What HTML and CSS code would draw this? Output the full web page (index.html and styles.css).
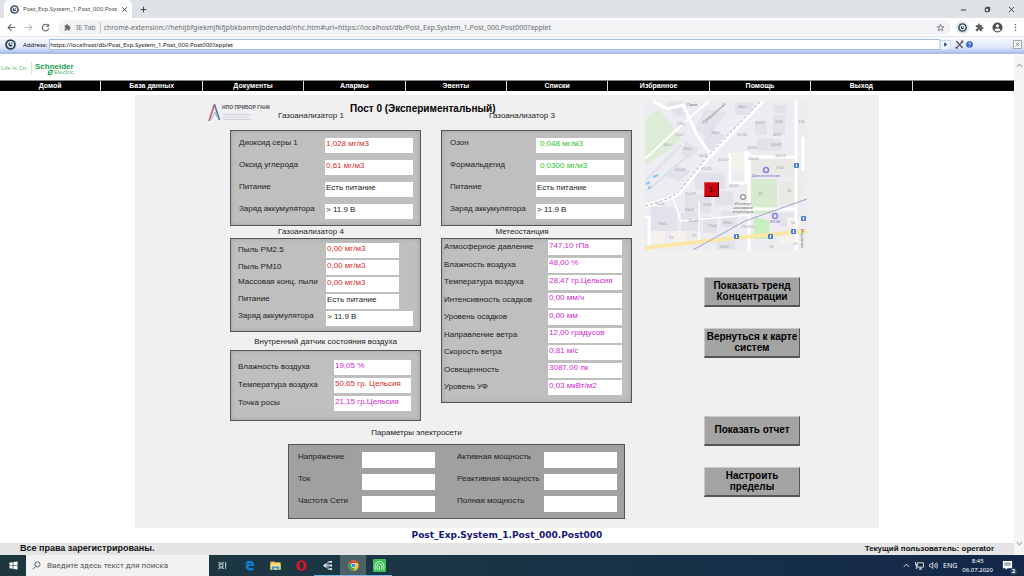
FILE: index.html
```html
<!DOCTYPE html>
<html lang="ru">
<head>
<meta charset="utf-8">
<title>Post_Exp.System_1.Post_000.Post000</title>
<link rel="stylesheet" href="styles.css">
</head>
<body>
<svg class="defs" width="0" height="0" aria-hidden="true">
  <symbol id="ietab" viewBox="0 0 10 10"><circle cx="5" cy="5" r="4.8" fill="#2c4258"/><circle cx="5" cy="5" r="2.6" fill="none" stroke="#e8f1f6" stroke-width="1.3"/><path d="M5 4.8h2.8M5 2.6v2.4" stroke="#e8f1f6"/></symbol>
  <symbol id="puzzle" viewBox="0 0 24 24"><path fill="#5f6368" d="M20.5 11H19V7a2 2 0 0 0-2-2h-4V3.500a2.500 2.500 0 0 0-5 0V5H4a2 2 0 0 0-2 2v3.800h1.500a2.700 2.700 0 0 1 0 5.400H2V20a2 2 0 0 0 2 2h3.800v-1.500a2.700 2.700 0 0 1 5.400 0V22H17a2 2 0 0 0 2-2v-4h1.500a2.500 2.500 0 0 0 0-5z"/></symbol>
</svg>

<header class="tabstrip">
  <div class="tab">
    <svg class="ico9"><use href="#ietab"/></svg>
    <span class="tab-title">Post_Exp.System_1.Post_000.Post</span>
    <button class="plain" aria-label="Закрыть вкладку"><svg class="ico7" viewBox="0 0 8 8"><path d="M1.500 1.500l5 5M6.500 1.500l-5 5" stroke="#3c4043" stroke-width="1.100"/></svg></button>
  </div>
  <button class="plain new-tab" aria-label="Новая вкладка"><svg class="ico7" viewBox="0 0 8 8"><path d="M4 .8v6.400M.8 4h6.400" stroke="#3c4043" stroke-width="1.100"/></svg></button>
  <div class="window-buttons">
    <button class="plain" aria-label="Свернуть"><svg class="ico7" viewBox="0 0 8 8"><path d="M1 4.500h6" stroke="#222"/></svg></button>
    <button class="plain" aria-label="Восстановить"><svg class="ico7" viewBox="0 0 8 8"><path d="M1.500 2.500h4v4h-4zM2.500 2.500v-1h4v4h-1" fill="none" stroke="#222"/></svg></button>
    <button class="plain" aria-label="Закрыть"><svg class="ico7" viewBox="0 0 8 8"><path d="M1 1l6 6M7 1L1 7" stroke="#222" stroke-width=".9"/></svg></button>
  </div>
</header>

<div class="toolbar">
  <button class="plain" aria-label="Назад"><svg class="ico9" viewBox="0 0 10 10"><path d="M9.200 5H1.400M4.800 1.400L1.200 5l3.600 3.600" fill="none" stroke="#5f6368" stroke-width="1.200"/></svg></button>
  <button class="plain" aria-label="Вперёд"><svg class="ico9" viewBox="0 0 10 10"><path d="M.8 5h7.800M5.200 1.400L8.800 5 5.200 8.600" fill="none" stroke="#bdc1c6" stroke-width="1.200"/></svg></button>
  <button class="plain" aria-label="Обновить"><svg class="ico9" viewBox="0 0 10 10"><path d="M8.200 3A3.700 3.700 0 1 0 8.700 6" fill="none" stroke="#5f6368" stroke-width="1.200"/><path d="M9 .8v3.500H5.500z" fill="#5f6368"/></svg></button>
  <div class="omnibox">
    <svg class="ico7"><use href="#puzzle"/></svg>
    <span class="scheme">IE Tab</span>
    <input class="omni-input" aria-label="Адрес страницы" value="chrome-extension://hehijbfgiekmjfkfjpbkbammjbdenadd/nhc.htm#url=https://localhost/db/Post_Exp.System_1.Post_000.Post000?applet">
    <button class="plain" aria-label="В закладки"><svg class="ico9" viewBox="0 0 24 24"><path d="M12 3.500l2.500 6 6.500.5-5 4.200 1.600 6.300-5.600-3.500-5.600 3.500L8 14.200 3 10l6.500-.5z" fill="none" stroke="#5f6368" stroke-width="2"/></svg></button>
  </div>
  <button class="plain ext-active" aria-label="IE Tab"><svg class="ico9"><use href="#ietab"/></svg></button>
  <button class="plain" aria-label="Расширения"><svg class="ico9"><use href="#puzzle"/></svg></button>
  <button class="plain" aria-label="Профиль"><svg class="ico11" viewBox="0 0 12 12"><circle cx="6" cy="6" r="5.500" fill="#4d5156"/><circle cx="6" cy="4.200" r="1.700" fill="#fff"/><path d="M2.700 8.600c1-1.900 5.600-1.900 6.600 0-1.600 2-5 2-6.600 0z" fill="#fff"/></svg></button>
  <button class="plain" aria-label="Меню"><svg class="ico9" viewBox="0 0 10 10"><path d="M5 1v1.400M5 4.300v1.400M5 7.600V9" stroke="#5f6368" stroke-width="1.400"/></svg></button>
</div>

<div class="iebar">
  <svg class="ico11"><use href="#ietab"/></svg>
  <label for="ie-url">Address:</label>
  <input id="ie-url" value="https://localhost/db/Post_Exp.System_1.Post_000.Post000?applet">
  <button class="plain go" aria-label="Перейти"><svg class="ico7" viewBox="0 0 8 8"><path d="M2.500 1.500L6 4 2.500 6.500z" fill="#1e4796"/></svg></button>
  <button class="plain tools" aria-label="Настройки"><svg class="ico9" viewBox="0 0 10 10"><path d="M1.500 1l7 8M8.500 1.500L1.500 9" stroke="#4a4f55" stroke-width="1.500"/><path d="M6.500 1.500l2-.7.6 2M1 7.500l.3 1.700 2-.2" fill="none" stroke="#4a4f55"/></svg></button>
  <button class="plain" aria-label="Справка"><svg class="ico7" viewBox="0 0 8 8"><circle cx="4" cy="4" r="3.800" fill="#3465cf"/><path d="M2.800 3.200c0-1.600 2.600-1.500 2.400 0C5.100 4 4 4 4 5M4 5.600v1" fill="none" stroke="#fff" stroke-width=".9"/></svg></button>
  <button class="plain ie-close" aria-label="Закрыть панель"><svg class="ico9" viewBox="0 0 10 10"><path d="M.5.500h9v9h-9z" fill="#fff" stroke="#9a9a9a"/><path d="M2.800 2.800l4.400 4.400M7.200 2.800L2.800 7.200" stroke="#777"/></svg></button>
</div>

<div class="viewport">
  <main class="page">
    <div class="brand">
      <span class="life">Life Is On</span>
      <span class="schneider"><b>Schneider</b><span class="electric"><svg class="mark" viewBox="0 0 6 5"><path d="M1 4.500L2 .5h3.500l-1 4zM2 3.500L4.500 1.500" fill="none" stroke="#27a350"/></svg>Electric</span></span>
    </div>
    <nav class="menu">
      <a href="#home">Домой</a><a href="#db">База данных</a><a href="#docs">Документы</a><a href="#alarms">Алармы</a><a href="#events">Эвенты</a><a href="#lists">Списки</a><a href="#fav">Избранное</a><a href="#help">Помощь</a><a href="#exit">Выход</a><span></span>
    </nav>

    <div class="applet">
      <div class="data">
        <div class="post-head">
          <svg class="npo" viewBox="0 0 45 20" aria-hidden="true"><path d="M1 18L6.500 1.500" stroke="#c8566a" stroke-width="1.600"/><path d="M6.500 1.500L11.500 17" stroke="#5870a8" stroke-width="1.600"/><path d="M3.500 16.500L7 9l2 5" fill="none" stroke="#a9b2cc"/><path d="M15 11.500h28M15 14h26M15 16.500h28" stroke="#c9ccde" stroke-width=".9"/></svg>
          <span class="npo-name">НПО ПРИБОР ГАНК</span>
          <h1>Пост 0 (Экспериментальный)</h1>
        </div>
        <div class="columns">
          <div class="column">
            <h2 class="shifted first">Газоанализатор 1</h2>
            <section class="panel gas">
              <div class="row"><label for="so2">Диоксид серы 1</label><input readonly id="so2" class="red" value="1,028 мг/м3"></div>
              <div class="row"><label for="co">Оксид углерода</label><input readonly id="co" class="red" value="0,61 мг/м3"></div>
              <div class="row"><label for="p1">Питание</label><input readonly id="p1" value="Есть питание"></div>
              <div class="row"><label for="b1">Заряд аккумулятора</label><input readonly id="b1" value="&gt; 11.9 В"></div>
            </section>
            <h2 class="shifted">Газоанализатор 4</h2>
            <section class="panel dust">
              <div class="row low"><label for="pm25">Пыль PM2.5</label><input readonly id="pm25" class="red" value="0,00 мг/м3"></div>
              <div class="row low"><label for="pm10">Пыль PM10</label><input readonly id="pm10" class="red" value="0,00 мг/м3"></div>
              <div class="row"><label for="mass">Массовая конц. пыли</label><input readonly id="mass" class="red" value="0,00 мг/м3"></div>
              <div class="row"><label for="p4">Питание</label><input readonly id="p4" value="Есть питание"></div>
              <div class="row wide"><label for="b4">Заряд аккумулятора</label><input readonly id="b4" value="&gt; 11.9 В"></div>
            </section>
            <h2 class="indoor-title">Внутренний датчик состояния воздуха</h2>
            <section class="panel indoor">
              <div class="row low"><label for="ih">Влажность воздуха</label><input readonly id="ih" class="pink" value="19,05 %"></div>
              <div class="row low"><label for="it">Температура воздуха</label><input readonly id="it" class="red" value="50,65 гр. Цельсия"></div>
              <div class="row low"><label for="idp">Точка росы</label><input readonly id="idp" class="pink" value="21,15 гр.Цельсия"></div>
            </section>
          </div>
          <div class="column">
            <h2 class="shifted first">Газоанализатор 3</h2>
            <section class="panel gas">
              <div class="row"><label for="o3">Озон</label><input readonly id="o3" class="green" value="0,048 мг/м3"></div>
              <div class="row"><label for="ch2o">Формальдегид</label><input readonly id="ch2o" class="green" value="0,0300 мг/м3"></div>
              <div class="row"><label for="p3">Питание</label><input readonly id="p3" value="Есть питание"></div>
              <div class="row"><label for="b3">Заряд аккумулятора</label><input readonly id="b3" value="&gt; 11.9 В"></div>
            </section>
            <h2 class="shifted">Метеостанция</h2>
            <section class="panel meteo">
              <div class="row low"><label for="m1">Атмосферное давление</label><input readonly id="m1" class="pink" value="747,10 гПа"></div>
              <div class="row low"><label for="m2">Влажность воздуха</label><input readonly id="m2" class="pink" value="48,00 %"></div>
              <div class="row low"><label for="m3">Температура воздуха</label><input readonly id="m3" class="pink" value="28,47 гр.Цельсия"></div>
              <div class="row low"><label for="m4">Интенсивность осадков</label><input readonly id="m4" class="pink" value="0,00 мм/ч"></div>
              <div class="row low"><label for="m5">Уровень осадков</label><input readonly id="m5" class="pink" value="0,00 мм"></div>
              <div class="row low"><label for="m6">Направление ветра</label><input readonly id="m6" class="pink" value="12,00 градусов"></div>
              <div class="row low"><label for="m7">Скорость ветра</label><input readonly id="m7" class="pink" value="0,81 м/с"></div>
              <div class="row low"><label for="m8">Освещенность</label><input readonly id="m8" class="pink" value="3087,00 лк"></div>
              <div class="row low"><label for="m9">Уровень УФ</label><input readonly id="m9" class="pink" value="0,03 мкВт/м2"></div>
            </section>
          </div>
        </div>
        <div class="power-block">
          <h2 class="power-title">Параметры электросети</h2>
          <section class="panel power">
            <label for="e1">Напряжение</label><input readonly id="e1"><label for="e4">Активная мощность</label><input readonly id="e4">
            <label for="e2">Ток</label><input readonly id="e2"><label for="e5">Реактивная мощность</label><input readonly id="e5">
            <label for="e3">Частота Сети</label><input readonly id="e3"><label for="e6">Полная мощность</label><input readonly id="e6">
          </section>
        </div>
      </div>

      <aside class="side">
        <svg class="map" viewBox="0 0 162 149">
          <rect width="162" height="149" fill="#ededf1"/>
          <path d="M0 20L14 8 36 38 22 50 0 64z" fill="#dcecd6"/>
          <path d="M106 78h26v35h-26z" fill="#d8ebd0"/><path d="M109 116l16 4-1 18h-15z" fill="#c9efbd"/>
          <path d="M107 58h44v18h-44zM134 80h22v24h-22z" fill="#ebe9e6"/>
          <g fill="#e1e2ea"><path d="M60 8l22 4-20 24-12-8zM22 2l14-2 8 14-12 2zM66 28l14 6-14 16-10-6zM110 20h12v14h-12zM128 14h12v20h-12zM112 38h24v12h-24zM128 4h14v8h-14zM40 40l14 8-10 10-8-6zM30 64l16 6-12 10-12-4zM50 72h30v16H50zM40 94h26v18H40zM70 90h18v14H70zM6 106h26v24H6zM36 112h20v18H36zM58 116h14v16H58zM76 110h16v16H76zM134 112h20v14h-20zM72 140h18v9H72zM90 2h18v12H90z"/></g>
          <g fill="#f5f2ee"><path d="M6 130h14v13H6zM26 130h14v10H26zM134 132h20v12h-20zM88 52h12v18H88zM142 116h14v10h-14z"/></g>
          <g fill="none" stroke="#fff">
            <path d="M0 105Q28 98 36 90L62 58 118 0" stroke-width="4"/>
            <path d="M8 0l14 8 16-4 14 30 14 20" stroke-width="3"/><path d="M0 58l28-26 38-34" stroke-width="2"/>
            <path d="M85 52v30h16V50M104 52v97M151 0v149M0 116h4v33M104 56h48M104 108h48M158 36v34" stroke-width="3"/>
            <path d="M28 98l8 22 68-6M54 100v40" stroke-width="1.500"/>
          </g>
          <path d="M0 80L36 44M2 90L46 52" stroke="#dde0ea" stroke-width="2"/>
          <path d="M0 105Q28 98 36 88L62 56 116 0" fill="none" stroke="#a6a6a6" stroke-dasharray="3 2"/>
          <path d="M0 147L60 140 110 135 162 130" fill="none" stroke="#fbe7a9" stroke-width="4"/>
          <path d="M48 149L100 120 162 98" fill="none" stroke="#9da2cc"/>
          <path d="M1 83l4-2M8 76l5-2M3 87l3-1" stroke="#83cbee" stroke-width="2"/>
          <g class="house">
            <text x="32" y="24">23к2</text><text x="30" y="35">24к2</text><text x="18" y="45">30к1</text><text x="38" y="49">28к1</text><text x="66" y="33">33к3</text><text x="92" y="35">32/34</text><text x="102" y="48">32/34</text><text x="54" y="56">30/3</text><text x="30" y="70">31к45</text><text x="56" y="69">31к30</text><text x="73" y="60">31к19</text><text x="40" y="94">31к28</text><text x="58" y="105">31к3</text><text x="11" y="104">31к4</text><text x="40" y="110">31к4</text><text x="43" y="121">31к46</text><text x="13" y="124">18к3</text><text x="78" y="123">19к2</text><text x="63" y="126">19к4</text><text x="96" y="127">29к310</text><text x="24" y="138">19</text><text x="47" y="136">15</text><text x="75" y="147">35к3</text><text x="110" y="23">30/37</text><text x="130" y="22">33/4</text><text x="128" y="35">30/2</text><text x="126" y="45">30к33</text><text x="130" y="56">30к13</text><text x="131" y="68">37к2</text><text x="103" y="59">34к56</text><text x="84" y="86">30/29</text><text x="93" y="7">30к1</text><text x="153" y="22">136</text><text x="113" y="94">43</text><text x="142" y="91">45</text><text x="146" y="123">50</text><text x="148" y="144">26</text><text x="124" y="147">76</text>
            <text transform="translate(59 23) rotate(-42)" class="street">Промышленная</text><text x="42" y="5" class="street">Пром.</text>
            <text transform="translate(156 128) rotate(90)" class="street">Миронова</text>
          </g>
          <g fill="#4581d6"><rect x="149" y="62" width="5" height="5" rx="1"/><rect x="156" y="115" width="5" height="5" rx="1"/><rect x="146" y="128" width="5" height="5" rx="1"/><rect x="123" y="133" width="5" height="5" rx="1"/><rect x="89" y="133" width="5" height="5" rx="1"/></g>
          <g fill="#fff"><path d="M151 63h1v3h-1zM158 116h1v3h-1zM148 129h1v3h-1zM125 134h1v3h-1zM91 134h1v3h-1z"/></g>
          <g fill="none" stroke="#8a77e4"><circle cx="121" cy="69" r="2.500" stroke-width="1.500"/><circle cx="130" cy="115" r="2.500" stroke-width="1.500"/></g>
          <circle cx="98" cy="96" r="2.400" fill="#fff" stroke="#8f8f94" stroke-width="1.200"/>
          <g class="poi"><text x="121" y="76">Дом отопления</text><text x="130" y="122">ФКЗБ</text></g>
          <g class="inst"><text x="98" y="104">Институт</text><text x="98" y="108">экономики</text><text x="98" y="112">и культуры</text></g>
          <path d="M59 81h15v15H59z" fill="#c90712"/><path d="M59.500 95.500v-14h14" fill="none" stroke="#f04848"/><path d="M60 95.500h13.500V82" fill="none" stroke="#5e0006"/>
          <text x="66" y="91" class="pin">1</text>
        </svg>
        <button class="act">Показать тренд Концентрации</button>
        <button class="act">Вернуться к карте систем</button>
        <button class="act apart">Показать отчет</button>
        <button class="act">Настроить<br>пределы</button>
      </aside>
    </div>
    <p class="object-name">Post_Exp.System_1.Post_000.Post000</p>
    <footer class="foot"><span class="rights">Все права зарегистрированы.</span><span class="user">Текущий пользователь: operator</span></footer>
  </main>
  <div class="scroll">
    <svg class="ico7" viewBox="0 0 8 8"><path d="M1 5.500l3-3 3 3" fill="none" stroke="#a5a5a5" stroke-width="1.200"/></svg>
    <svg class="ico7" viewBox="0 0 8 8"><path d="M1 2.500l3 3 3-3" fill="none" stroke="#a5a5a5" stroke-width="1.200"/></svg>
  </div>
</div>

<div class="taskbar">
  <button class="plain start" aria-label="Пуск"><svg class="ico9" viewBox="0 0 10 10"><path d="M.5 1.800l3.700-.5v3.300H.5zM4.900 1.200L9.500.5v4.100H4.900zM.5 5.300h3.700v3.300L.5 8.100zM4.900 5.300h4.600v4.200l-4.600-.7z" fill="#fff"/></svg></button>
  <label class="search">
    <svg class="ico9" viewBox="0 0 10 10"><circle cx="6" cy="3.800" r="2.900" fill="none" stroke="#444" stroke-width=".9"/><path d="M3.900 6L.8 9.200" stroke="#444" stroke-width=".9"/></svg>
    <input placeholder="Введите здесь текст для поиска" aria-label="Поиск">
  </label>
  <button class="plain task" aria-label="Представление задач"><svg class="ico9" viewBox="0 0 10 10"><path d="M1 1v1.300h5V1M1.500 3.500h4v3h-4zM1 9V7.700h5V9M8.500 1v8M7.800 4h1.500" fill="none" stroke="#dfe6e8" stroke-width=".9"/></svg></button>
  <button class="plain task" aria-label="Edge"><svg class="ico11" viewBox="0 0 12 12"><path d="M1 5.500C1.800-.8 11-.8 11.200 6.600H4.600c.2 2.700 3.700 3 5.700 1.600v2.500C6.500 13 2 11.200 2 7.200c0-1.700 1-3 2.400-3.700C2.800 3.600 1.500 4.500 1 5.500zM4.700 4.900h3.500C8.100 2.600 5 2.600 4.700 4.900z" fill="#0c80d8"/></svg></button>
  <button class="plain task" aria-label="Проводник"><svg class="ico11" viewBox="0 0 12 12"><path d="M.5 1.500h4l1 1h6v8H.5z" fill="#f0c14b"/><path d="M.5 4h11v6.500H.5z" fill="#fbdf86"/><path d="M2 7h8v4H8V9H4v2H2z" fill="#3d93d3"/></svg></button>
  <button class="plain task" aria-label="Opera"><svg class="ico11" viewBox="0 0 12 12"><circle cx="6" cy="6" r="5.700" fill="#d9152b"/><ellipse cx="6" cy="6" rx="2.200" ry="4" fill="#1d343b"/></svg></button>
  <button class="plain task open" aria-label="SCADA"><svg class="ico11" viewBox="0 0 12 12"><path d="M1 6l4-3v6z" fill="#e6ecf0"/><path d="M5 6h2M6.500 2v8M6.500 2H8M6.500 10H8M6.500 6H8" fill="none" stroke="#cdd6e4"/><path d="M8 1h3v2H8zM8 5h3v2H8zM8 9h3v2H8z" fill="#e6ecf0"/></svg></button>
  <button class="plain task open current" aria-label="Chrome"><svg class="ico11" viewBox="0 0 12 12"><circle cx="6" cy="6" r="5.600" fill="#f7c62c"/><path d="M6 6L1.200 3.100A5.600 5.600 0 0 1 10.900 3.300H6z" fill="#df4538"/><path d="M1.200 3.100A5.600 5.600 0 0 0 5.500 11.600L8 7.500 6 6z" fill="#36a552"/><circle cx="6" cy="6" r="2.600" fill="#fff"/><circle cx="6" cy="6" r="2" fill="#447fe8"/></svg></button>
  <button class="plain task open" aria-label="Сервер"><svg class="ico13" viewBox="0 0 13 13"><rect width="13" height="13" rx="1" fill="#3fc25c"/><path d="M2.500 10.500a4.500 5.500 0 1 1 8 0M4.500 10.500a2.600 3.500 0 1 1 4 0M6.500 7v4" fill="none" stroke="#d6f5dc"/></svg></button>
  <div class="tray">
    <svg class="ico7" viewBox="0 0 8 8"><path d="M1 5.500l3-3 3 3" fill="none" stroke="#fff"/></svg>
    <svg class="ico9" viewBox="0 0 10 10"><path d="M2.500 2h7v4.800h-7zM4 9h4M6 7v2M.5 1v3h2M1.500 4v5" fill="none" stroke="#fff" stroke-width=".9"/></svg>
    <svg class="ico9" viewBox="0 0 10 10"><path d="M.5 3.700h1.600l2-2v6.600l-2-2H.5zM5.500 3.500q1.200 1.500 0 3M7 2.500q2 2.500 0 5M8.400 1.500q2.600 3.500 0 7" fill="none" stroke="#fff" stroke-width=".8"/></svg>
    <span class="lang">ENG</span>
    <span class="clock">8:45<br>06.07.2020</span>
    <span class="note"><svg class="ico11" viewBox="0 0 12 12"><path d="M1 1h10v8H6L4 11V9H1z" fill="#fff"/><path d="M2.500 3.500h7M2.500 5.500h7" stroke="#23385a" stroke-width=".8"/></svg><b class="badge">2</b></span>
  </div>
</div>
</body>
</html>
```
FILE: styles.css
```css
* { box-sizing: border-box; }
body { margin: 0; min-height: 100vh; display: flex; flex-direction: column; background: #fff; color: #222; font: 8px/10px "Liberation Sans", Arial, sans-serif; }
h1, h2, p { margin: 0; font-weight: 400; }
input { border: 0; margin: 0; padding: 0; font: inherit; color: inherit; background: none; min-width: 0; outline: 0; border-radius: 0; }
.defs { position: absolute; }
.plain { border: 0; background: none; padding: 0; display: flex; align-items: center; justify-content: center; }
.ico7 { width: 7px; height: 7px; flex: none; display: block; }
.ico9 { width: 9px; height: 9px; flex: none; display: block; }
.ico11 { width: 11px; height: 11px; flex: none; display: block; }
.ico13 { width: 13px; height: 13px; flex: none; display: block; }

.tabstrip { height: 18px; background: #dee1e6; display: flex; align-items: center; padding-left: 4px; font: 6px/10px "Noto Sans", sans-serif; }
.tab { display: flex; align-items: center; gap: 4px; width: 128px; height: 18px; padding: 0 5px 0 6px; background: #fff; border-radius: 5px 5px 0 0; color: #45484c; }
.tab-title { flex: 1; white-space: nowrap; }
.new-tab { margin-left: 8px; }
.window-buttons { display: flex; gap: 17px; margin-left: auto; padding-right: 9px; }

.toolbar { height: 19px; display: flex; align-items: center; gap: 8px; padding: 0 4px 0 7px; border-bottom: 1px solid #e3e5e8; }
.omnibox { flex: 1; display: flex; align-items: center; height: 15px; border-radius: 8px; background: #f1f3f4; padding: 0 6px; font: 7px/11px "Noto Sans", sans-serif; color: #6a6e73; }
.scheme { margin-left: 5px; padding-right: 4px; border-right: 1px solid #c4c7ca; }
.omni-input { flex: 1; margin-left: 3px; }
.ext-active { padding: 2px; margin: 0 -2px 0 -3px; border-radius: 50%; background: #dfe6e8; }

.iebar { height: 17px; display: flex; align-items: center; padding: 0 2px 0 5px; background: linear-gradient(#fafcff, #dde6fa 70%, #b4c7f0); border-bottom: 2px solid #abc0ea; font: 6px/10px "Noto Sans", sans-serif; color: #111; }
.iebar label { margin: 0 2px 0 7px; }
.iebar input { flex: 1; height: 11px; background: #fff; border: 1px solid #a9bce6; border-right-color: #d5def2; }
.go { width: 11px; height: 10px; background: #eef3ff; border: 1px solid #ccd8f2; }
.tools { margin: 0 2px 0 4px; }
.ie-close { margin-left: 40px; }

.viewport { flex: 1; display: flex; }
.page { flex: 1; display: flex; flex-direction: column; }
.scroll { width: 10px; display: flex; flex-direction: column; justify-content: space-between; align-items: center; padding: 8px 0; background: #f5f5f5; }
.brand { height: 26px; display: flex; align-items: center; padding-top: 3px; }
.life { color: #6cc479; font-size: 6px; width: 32px; padding-left: 1px; border-right: 1px solid #d2e6d6; white-space: nowrap; line-height: 13px; }
.schneider { margin-left: 3px; color: #15a04a; font: 8px/7px "Liberation Sans", sans-serif; display: flex; flex-direction: column; }
.electric { display: flex; align-items: center; justify-content: flex-end; font-size: 6px; line-height: 5px; color: #58b877; }
.mark { width: 6px; height: 5px; margin-right: 1px; }
.menu { display: grid; grid-template-columns: repeat(10, 1fr); background: #000; border-top: 1px solid #888; }
.menu a { color: #fff; text-decoration: none; text-align: center; font-weight: 700; font-size: 7px; line-height: 10px; border-right: 1px solid #ddd; }

.applet { width: 744px; max-width: 100%; align-self: center; margin-top: 4px; background: #f0f0f0; display: flex; padding: 0 0 9px 95px; }
.data { width: 402px; flex: none; }
.post-head { display: flex; height: 16px; padding-top: 8px; }
.npo { width: 45px; height: 20px; margin-left: -22px; flex: none; }
.npo-name { width: 30px; margin-left: -31px; font: 700 5px/8px "Liberation Sans Narrow", "Liberation Sans", sans-serif; color: #555560; white-space: nowrap; }
.post-head h1 { margin-left: 98px; font-size: 10px; line-height: 12px; font-weight: 700; color: #000; white-space: nowrap; }
.columns { display: grid; grid-template-columns: 191px 191px; gap: 20px; }
.column { display: flex; flex-direction: column; }
h2 { font-size: 8px; line-height: 10px; text-align: center; padding: 1px 0; }
.shifted { padding-right: 29px; }
.first { padding: 0 29px 9px 0; }
.indoor-title { padding: 5px 0 3px; }
.panel { border: 1px solid #555; background: #bfbfbf; box-shadow: inset 0 0 5px #a4a4a4; }
.row { display: flex; justify-content: space-between; align-items: flex-start; white-space: nowrap; }
.row.low label { padding-top: 2px; }
.panel input { height: 15px; background: #fff; padding: 0 1px 5px; line-height: 10px; flex: none; }
.gas { display: grid; gap: 7px; padding: 7px 7px 6px 8px; }
.gas input { width: 88px; }
.dust { display: grid; gap: 2px; padding: 4px 7px 5px; }
.dust input { width: 73px; margin-right: 14px; }
.dust .wide input { width: 87px; margin-right: 0; }
.indoor { display: grid; gap: 3px; padding: 9px 9px 9px 7px; }
.indoor input { width: 77px; }
.meteo { display: flex; flex-direction: column; justify-content: space-between; height: 165px; padding: 1px 9px 7px 2px; }
.meteo input { width: 74px; }
.panel .red { color: #dd2a2a; }
.panel .green { color: #2dc52d; padding-left: 4px; }
.panel .pink { color: #d428d4; }
.power-block { width: 337px; margin-left: 58px; }
.power-title { padding: 7px 80px 6px 0; }
.power { display: grid; grid-template-columns: 64px 73px 109px 73px; row-gap: 6px; padding: 7px 8px 6px 9px; background: #a0a0a0; box-shadow: none; }
.power label { white-space: nowrap; }
.power label:nth-of-type(even) { margin-left: 22px; }
.power input { height: 16px; }

.side { width: 162px; margin-left: 13px; padding-top: 6px; display: flex; flex-direction: column; align-items: flex-start; }
.map { width: 162px; height: 149px; flex: none; margin-bottom: 27px; }
.house text { font-size: 4px; fill: #a0a1ab; }
.house .street { font-size: 4px; fill: #777; }
.poi text { font-size: 4px; fill: #7460df; text-anchor: middle; }
.inst text { font-size: 4px; fill: #6c6c70; text-anchor: middle; }
.pin { font-size: 8px; text-anchor: middle; }
.act { width: 96px; height: 30px; margin: 0 0 21px 59px; padding: 0 0 2px; border: 1px solid; border-color: #c8c8c8 #555 #555 #c8c8c8; border-bottom-width: 2px; background: #a3a3a3; color: #000; font: 700 10px/11px "Liberation Sans", Arial, sans-serif; }
.apart { margin-top: 37px; }

.object-name { flex: 1; text-align: center; font: 700 9px/15px "DejaVu Sans", Verdana, sans-serif; color: #14147c; }
.foot { display: flex; justify-content: space-between; padding: 0 20px; height: 12px; background: #e4e4e4; color: #111; font-weight: 700; line-height: 11px; }
.rights { font-size: 9px; }

.taskbar { height: 21px; display: flex; align-items: stretch; background: linear-gradient(90deg, #1c383e, #1b3645 40%, #13284a); color: #fff; font: 7px/10px "Noto Sans", sans-serif; }
.start { width: 26px; }
.search { width: 183px; display: flex; align-items: center; gap: 6px; padding: 0 6px; background: #f2f2f2; color: #555; font: 8px/12px Roboto, sans-serif; }
.search input { flex: 1; }
.search input::placeholder { color: #555; opacity: 1; }
.task { width: 26px; border-bottom: 1px solid transparent; }
.search + .task { width: 27px; }
.open { border-bottom-color: #79b6e4; }
.current { background: #4c6068; }
.tray { margin-left: auto; display: flex; align-items: center; gap: 5px; padding-right: 11px; }
.lang { font-size: 7px; }
.clock { font-size: 6px; line-height: 9px; text-align: center; }
.note { position: relative; margin-left: 4px; }
.badge { position: absolute; right: -4px; bottom: -4px; width: 7px; height: 7px; border-radius: 50%; background: #33445f; border: 0; font: 700 6px/7px "Noto Sans", sans-serif; text-align: center; }
```
